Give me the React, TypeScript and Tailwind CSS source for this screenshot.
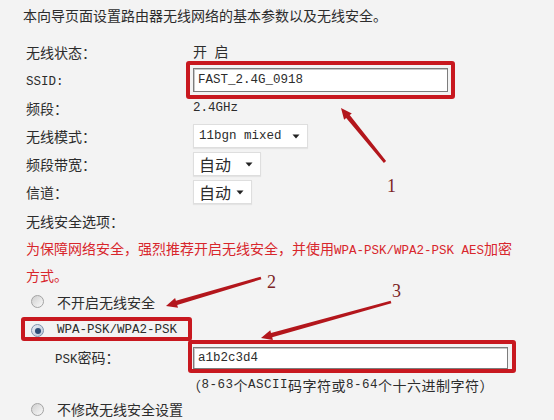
import type { ReactNode } from "react";

// latin runs use a narrower mono face next to the CJK text
const LAT = "font-['Liberation_Mono',monospace] text-[12.5px]";

function L({ children }: { children: ReactNode }) {
    return <span className={LAT}>{children}</span>;
}

function Row({ label, children }: { label: ReactNode; children?: ReactNode }) {
    return (
        <div className="flex items-center h-[28px]">
            <div className="w-[167px] shrink-0">{label}</div>
            <div className="flex items-center">{children}</div>
        </div>
    );
}

function Caret() {
    return (
        <svg width="8" height="5" viewBox="0 0 8 5" className="shrink-0">
            <path d="M0.5 0.5 H7.5 L4 4.5 Z" fill="#222" />
        </svg>
    );
}

function Select({ children, className }: { children: ReactNode; className: string }) {
    return (
        <div className={`flex items-center justify-between bg-white border border-[#dedede] shadow-[0_1px_1px_rgba(0,0,0,0.06)] pl-[5px] pr-[7px] ${className}`}>
            {children}
            <Caret />
        </div>
    );
}

function Radio({ checked }: { checked?: boolean }) {
    if (checked) {
        return (
            <div className="w-[13px] h-[13px] rounded-full border border-[#7f93ad] bg-gradient-to-br from-[#e9eef5] to-[#b9c7d8] flex items-center justify-center shrink-0">
                <div className="w-[6px] h-[6px] rounded-full bg-[#2d4d76]" />
            </div>
        );
    }
    return <div className="w-[13px] h-[13px] rounded-full border border-[#a3a3a3] bg-gradient-to-br from-[#cfcfcf] to-[#fafafa] shrink-0" />;
}

// tapered shaft + head, from tail (tx,ty) to tip (hx,hy)
function arrow(tx: number, ty: number, hx: number, hy: number) {
    const dx = hx - tx, dy = hy - ty;
    const len = Math.hypot(dx, dy);
    const ux = dx / len, uy = dy / len;
    const nx = -uy, ny = ux;
    const headLen = 11, headW = 5, tailW = 1.4, neckW = 2.2;
    const bx = hx - ux * headLen, by = hy - uy * headLen;
    const p = (x: number, y: number) => `${x.toFixed(1)},${y.toFixed(1)}`;
    return [
        p(tx + nx * tailW, ty + ny * tailW),
        p(bx + nx * neckW, by + ny * neckW),
        p(bx + nx * headW, by + ny * headW),
        p(hx, hy),
        p(bx - nx * headW, by - ny * headW),
        p(bx - nx * neckW, by - ny * neckW),
        p(tx - nx * tailW, ty - ny * tailW),
    ].join(" ");
}

function Marks() {
    return (
        <svg className="absolute inset-0 pointer-events-none" width="554" height="420" viewBox="0 0 554 420">
            <g fill="none" stroke="#c8181f" strokeWidth="4">
                <rect x="188" y="63" width="265" height="34" rx="1" />
                <rect x="23" y="319" width="167" height="20" rx="1" />
                <rect x="190" y="342" width="324" height="29" rx="1" />
            </g>
            <g fill="#b3161c">
                <polygon points={arrow(385, 162, 341, 108)} />
                <polygon points={arrow(261, 278, 166, 306)} />
                <polygon points={arrow(391, 302, 261, 338)} />
            </g>
            <g fill="#7c2424" fontFamily="'Liberation Serif', serif" fontSize="18">
                <text x="387" y="192">1</text>
                <text x="267" y="288">2</text>
                <text x="392" y="297">3</text>
            </g>
        </svg>
    );
}

export default function App() {
    return (
        <div className="relative w-[554px] h-[420px] overflow-hidden bg-[#f3f3f3] text-[#2c2c2c] text-[14px] leading-none font-['Noto_Sans_CJK_SC',sans-serif]">
            <p className="pl-[23px] pt-[7px] h-[24px] leading-[16px]">本向导页面设置路由器无线网络的基本参数以及无线安全。</p>

            <div className="pl-[26px] mt-[14px]">
                <Row label="无线状态：">
                    <span>开<L> </L>启</span>
                </Row>
                <Row label={<L>SSID:</L>}>
                    <div className="w-[255px] h-[24px] bg-white border border-[#7d7d7d] shadow-[inset_1px_1px_0_#c8c8c8] flex items-center pl-[4px]">
                        <L>FAST_2.4G_0918</L>
                    </div>
                </Row>
                <Row label="频段：">
                    <L>2.4GHz</L>
                </Row>
                <Row label="无线模式：">
                    <Select className="w-[115px] h-[24px]">
                        <L>11bgn mixed</L>
                    </Select>
                </Row>
                <Row label="频段带宽：">
                    <Select className="w-[68px] h-[24px] text-[16px]">
                        <span>自动</span>
                    </Select>
                </Row>
                <Row label="信道：">
                    <Select className="w-[59px] h-[24px] text-[16px]">
                        <span>自动</span>
                    </Select>
                </Row>

                <div className="h-[30px] flex items-center">无线安全选项：</div>
                <p className="text-[#d8262c] leading-[24px]">
                    为保障网络安全，强烈推荐开启无线安全，并使用<L>WPA-PSK/WPA2-PSK AES</L>加密
                    <br />
                    方式。
                </p>

                <div className="flex items-center h-[29px] ml-[5px] gap-[13px]">
                    <Radio />
                    <span>不开启无线安全</span>
                </div>
                <div className="flex items-center h-[29px] ml-[5px] gap-[13px]">
                    <Radio checked />
                    <L>WPA-PSK/WPA2-PSK</L>
                </div>
                <div className="flex items-center h-[26px] ml-[29px]">
                    <div className="w-[138px] shrink-0"><L>PSK</L>密码：</div>
                    <div className="w-[315px] h-[22px] bg-white border border-[#7d7d7d] shadow-[inset_1px_1px_0_#c8c8c8] flex items-center pl-[4px]">
                        <L>a1b2c3d4</L>
                    </div>
                </div>
                <div className="h-[28px] flex items-center pl-[161px] tracking-[0.5px]">
                    （<L>8-63</L>个<L>ASCII</L>码字符或<L>8-64</L>个十六进制字符）
                </div>
                <div className="flex items-center h-[20px] ml-[5px] gap-[13px]">
                    <Radio />
                    <span>不修改无线安全设置</span>
                </div>
            </div>

            <Marks />
        </div>
    );
}
